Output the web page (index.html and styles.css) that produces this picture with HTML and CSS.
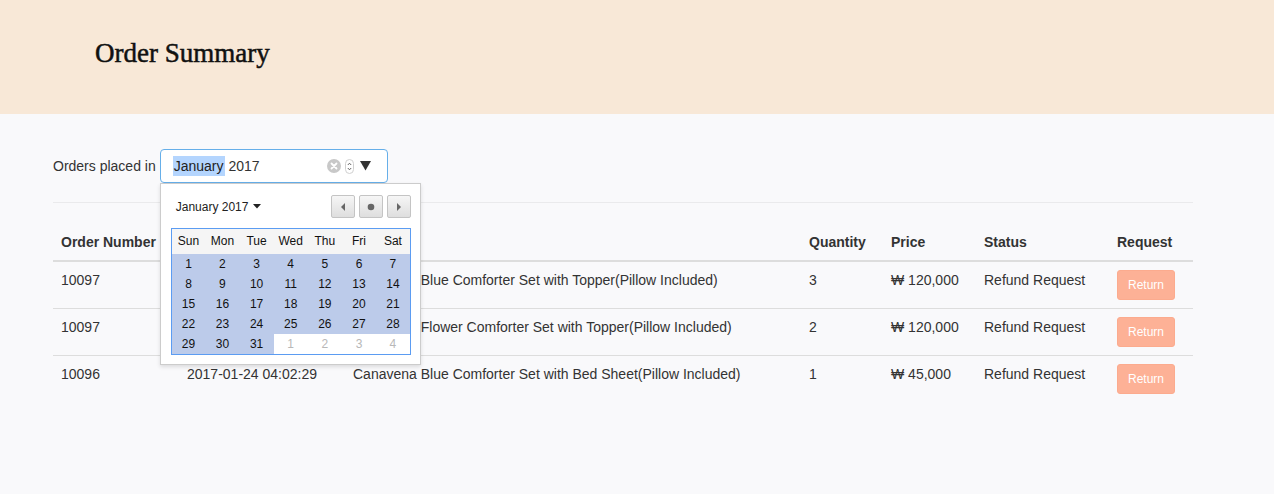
FILE: index.html
```html
<!DOCTYPE html>
<html>
<head>
<meta charset="utf-8">
<link rel="stylesheet" href="styles.css">
</head>
<body>
<header class="page-header">
  <h1 class="title">Order Summary</h1>
</header>
<main class="content">
  <div class="filter">
    <span class="filter-label">Orders placed in</span>
    <div class="month-field">
      <div class="month-input">
        <span class="sel">January</span>&nbsp;2017
        <span class="controls">
          <svg class="clear" width="14" height="14" viewBox="0 0 14 14"><circle cx="7" cy="7" r="7" fill="#c8c8c8"/><path d="M4.5 4.5 L9.5 9.5 M9.5 4.5 L4.5 9.5" stroke="#fff" stroke-width="1.8" stroke-linecap="round"/></svg>
          <svg class="spin" width="9" height="15" viewBox="0 0 9 15"><rect x="0.5" y="0.5" width="8" height="14" rx="4" fill="#fff" stroke="#d0d0d0"/><path d="M2.8 6 L4.5 4.2 L6.2 6 M2.8 9 L4.5 10.8 L6.2 9" fill="none" stroke="#555" stroke-width="0.9"/></svg>
          <svg class="drop" width="11" height="10" viewBox="0 0 11 10"><path d="M0 0 H11 L5.5 9.5 Z" fill="#333"/></svg>
        </span>
      </div>
      <div class="picker">
        <div class="picker-head">
          <span class="picker-month">January 2017 <svg width="8" height="5" viewBox="0 0 8 5"><path d="M0 0 H8 L4 4.5 Z" fill="#222"/></svg></span>
          <div class="nav">
            <span class="nav-btn"><svg width="6" height="8" viewBox="0 0 6 8"><path d="M5 0 V8 L1 4 Z" fill="#666"/></svg></span>
            <span class="nav-btn"><svg width="8" height="8" viewBox="0 0 8 8"><circle cx="4" cy="4" r="3.3" fill="#666"/></svg></span>
            <span class="nav-btn"><svg width="6" height="8" viewBox="0 0 6 8"><path d="M1 0 V8 L5 4 Z" fill="#666"/></svg></span>
          </div>
        </div>
        <table class="cal">
          <thead><tr><th>Sun</th><th>Mon</th><th>Tue</th><th>Wed</th><th>Thu</th><th>Fri</th><th>Sat</th></tr></thead>
          <tbody>
            <tr><td>1</td><td>2</td><td>3</td><td>4</td><td>5</td><td>6</td><td>7</td></tr>
            <tr><td>8</td><td>9</td><td>10</td><td>11</td><td>12</td><td>13</td><td>14</td></tr>
            <tr><td>15</td><td>16</td><td>17</td><td>18</td><td>19</td><td>20</td><td>21</td></tr>
            <tr><td>22</td><td>23</td><td>24</td><td>25</td><td>26</td><td>27</td><td>28</td></tr>
            <tr><td>29</td><td>30</td><td>31</td><td class="out">1</td><td class="out">2</td><td class="out">3</td><td class="out">4</td></tr>
          </tbody>
        </table>
      </div>
    </div>
  </div>
  <hr class="sep">
  <table class="orders">
    <thead>
      <tr><th class="c-num">Order Number</th><th class="c-date"></th><th class="c-prod"></th><th class="c-qty">Quantity</th><th class="c-price">Price</th><th class="c-status">Status</th><th class="c-req">Request</th></tr>
    </thead>
    <tbody>
      <tr><td>10097</td><td></td><td><span class="covered">Canavena </span>Blue Comforter Set with Topper(Pillow Included)</td><td>3</td><td>₩ 120,000</td><td>Refund Request</td><td><button class="btn-return">Return</button></td></tr>
      <tr><td>10097</td><td></td><td><span class="covered">Canavena </span>Flower Comforter Set with Topper(Pillow Included)</td><td>2</td><td>₩ 120,000</td><td>Refund Request</td><td><button class="btn-return">Return</button></td></tr>
      <tr><td>10096</td><td>2017-01-24 04:02:29</td><td>Canavena Blue Comforter Set with Bed Sheet(Pillow Included)</td><td>1</td><td>₩ 45,000</td><td>Refund Request</td><td><button class="btn-return">Return</button></td></tr>
    </tbody>
  </table>
</main>
</body>
</html>
```

FILE: styles.css
```css
* { box-sizing: border-box; }
html, body { margin: 0; padding: 0; }
body {
  background: #f9f9fb;
  font-family: "Liberation Sans", Arial, sans-serif;
  font-size: 14px;
  line-height: 20px;
  color: #333;
}
.page-header {
  background: #f8e8d7;
  height: 114px;
  padding: 36px 0 0 95px;
}
.title {
  margin: 0;
  font-family: "Liberation Serif", "DejaVu Serif", serif;
  font-weight: normal;
  font-size: 27px;
  line-height: 34px;
  color: #111;
  -webkit-text-stroke: 0.5px #111;
}
.content {
  padding: 35px 0 0 53px;
  width: 1193px;
}
.filter {
  display: flex;
  align-items: center;
  height: 34px;
}
.filter-label { margin-right: 4px; color: #333; }
.month-field { position: relative; }
.month-input {
  width: 228px;
  height: 34px;
  border: 1px solid #66afe9;
  border-radius: 4px;
  background: #fff;
  padding: 0 0 0 12px;
  display: flex;
  align-items: center;
  color: #333;
}
.sel { background: #b4d5fe; padding: 0 1px; color: #222; }
.controls {
  margin-left: auto;
  margin-right: 16px;
  display: flex;
  align-items: center;
}
.clear { margin-right: 4px; }
.spin { margin-right: 6px; }
.picker {
  position: absolute;
  left: 0;
  top: 34px;
  width: 261px;
  height: 182px;
  background: #fff;
  border: 1px solid #ccc;
  box-shadow: 0 2px 4px rgba(0,0,0,0.12);
  padding: 11px 9px 0 10px;
  z-index: 10;
}
.picker-head {
  display: flex;
  justify-content: space-between;
  align-items: center;
  height: 23px;
  margin-bottom: 10px;
}
.picker-month {
  font-size: 12px;
  padding-left: 5px;
  color: #222;
  display: flex;
  align-items: center;
  gap: 5px;
}
.nav { display: flex; gap: 4px; }
.nav-btn {
  width: 24px;
  height: 23px;
  border: 1px solid #c4c4c4;
  border-radius: 2px;
  background: linear-gradient(#f6f6f6, #dedede);
  display: flex;
  align-items: center;
  justify-content: center;
}
.cal {
  border-collapse: collapse;
  width: 240px;
  border: 1px solid #5b9cf2;
  font-size: 12px;
  color: #111;
  table-layout: fixed;
}
.cal th {
  font-weight: normal;
  background: #f5f5f5;
  height: 25px;
  padding: 0;
  text-align: center;
}
.cal td {
  background: #bccbea;
  height: 20px;
  padding: 0;
  text-align: center;
  line-height: 20px;
}
.cal td.out { background: #fff; color: #b8b8b8; }
.sep {
  border: 0;
  border-top: 1px solid #eaeaec;
  margin: 19px 0 21px 0;
  width: 1140px;
}
.orders {
  width: 1140px;
  border-collapse: collapse;
}
.orders th {
  text-align: left;
  font-weight: bold;
  padding: 8px;
  border-bottom: 2px solid #ddd;
  line-height: 20px;
  white-space: nowrap;
}
.orders td {
  padding: 8px;
  vertical-align: top;
  border-bottom: 1px solid #ddd;
  line-height: 20px;
  white-space: nowrap;
}
.covered { visibility: hidden; }
.orders tbody tr:last-child td { border-bottom: 0; }
.c-num { width: 126px; }
.c-date { width: 166px; }
.c-prod { width: 456px; }
.c-qty { width: 82px; }
.c-price { width: 93px; }
.c-status { width: 133px; }
.btn-return {
  font-family: "Liberation Sans", Arial, sans-serif;
  font-size: 12px;
  line-height: 18px;
  padding: 5px 10px;
  border: 1px solid #fcab8e;
  border-radius: 3px;
  background: #fdb196;
  color: #fff;
}
```
